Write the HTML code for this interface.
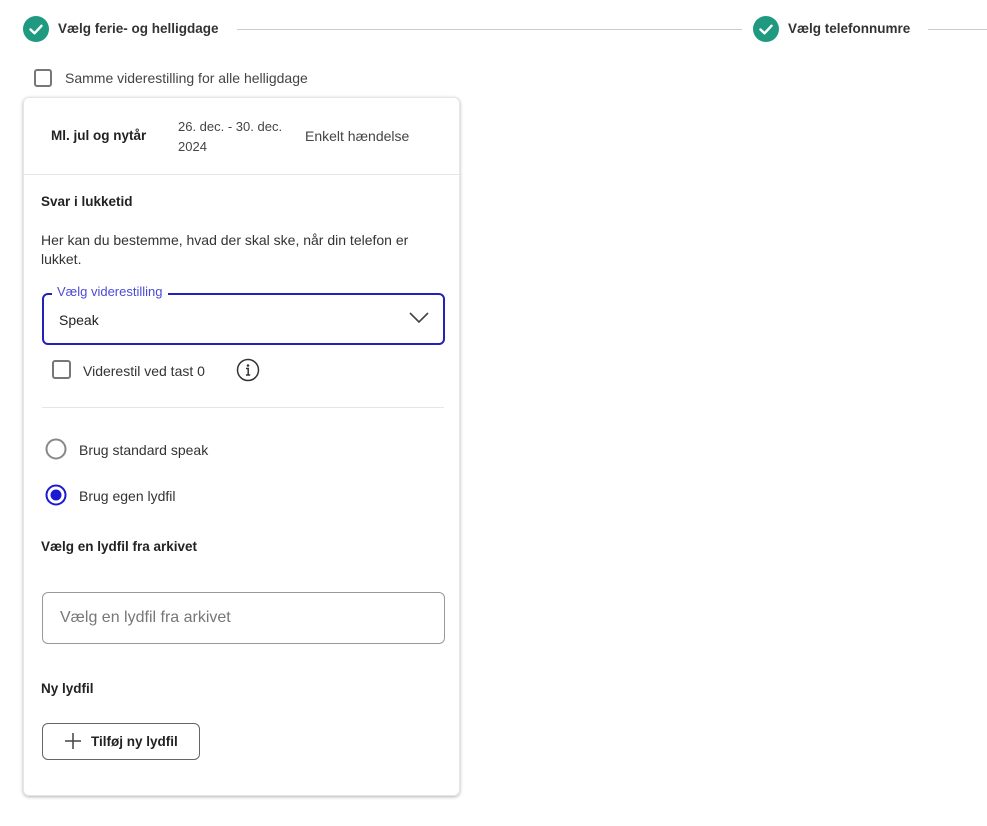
<!DOCTYPE html>
<html><head><meta charset="utf-8"><style>
*{margin:0;padding:0;box-sizing:border-box}
body{width:987px;height:826px;background:#fff;font-family:"Liberation Sans",sans-serif;color:#222;position:relative;overflow:hidden;font-size:14px}
.a{position:absolute;white-space:nowrap;line-height:16px}
.b{font-weight:bold}
.chk{position:absolute;width:18px;height:18px;border:2px solid #777;border-radius:3px;background:#fff}
</style></head><body>
<svg class="a" style="left:23px;top:16px" width="26" height="26"><circle cx="13" cy="13" r="13" fill="#1f9a80"/><path d="M7.5 13.5l4 3.8 7-7.5" stroke="#fff" stroke-width="2.4" fill="none" stroke-linecap="round" stroke-linejoin="round"/></svg>
<div class="a b" style="left:58px;top:21px;color:#333;font-size:13.5px">Vælg ferie- og helligdage</div>
<div class="a" style="left:237px;top:29px;width:505px;height:1px;background:#ccc"></div>
<svg class="a" style="left:753px;top:16px" width="26" height="26"><circle cx="13" cy="13" r="13" fill="#1f9a80"/><path d="M7.5 13.5l4 3.8 7-7.5" stroke="#fff" stroke-width="2.4" fill="none" stroke-linecap="round" stroke-linejoin="round"/></svg>
<div class="a b" style="left:788px;top:21px;color:#333;font-size:13.5px">Vælg telefonnumre</div>
<div class="a" style="left:928px;top:29px;width:59px;height:1px;background:#ccc"></div>

<div class="chk" style="left:34px;top:69px"></div>
<div class="a" style="left:65px;top:70px;color:#444">Samme viderestilling for alle helligdage</div>

<div class="a" style="left:23px;top:97px;width:437px;height:699px;border-radius:6px;box-shadow:0 1px 3px rgba(0,0,0,.3);border:1px solid #e6e6e6"></div>
<div class="a" style="left:24px;top:174px;width:438px;height:1px;background:#e6e6e6"></div>
<div class="a b" style="left:51px;top:128px;font-size:13.5px">Ml. jul og nytår</div>
<div class="a" style="left:178px;top:117px;line-height:20px;color:#444;font-size:13px">26. dec. - 30. dec.<br>2024</div>
<div class="a" style="left:305px;top:128px;color:#444">Enkelt hændelse</div>

<div class="a b" style="left:41px;top:194px;font-size:13.5px">Svar i lukketid</div>
<div class="a" style="left:41px;top:231px;line-height:19px;color:#333">Her kan du bestemme, hvad der skal ske, når din telefon er<br>lukket.</div>

<div class="a" style="left:42px;top:293px;width:403px;height:52px;border:2px solid #2222b8;border-radius:6px"></div>
<div class="a" style="left:52px;top:284px;background:#fff;padding:0 5px;color:#4b4bd6;font-size:13px">Vælg viderestilling</div>
<div class="a" style="left:59px;top:312px;color:#222">Speak</div>
<svg class="a" style="left:409px;top:312px" width="20" height="12"><path d="M1 1l9 9 9-9" stroke="#444" stroke-width="1.6" fill="none"/></svg>

<div class="chk" style="left:52px;top:360px;width:19px;height:19px"></div>
<div class="a" style="left:83px;top:363px;color:#333">Viderestil ved tast 0</div>
<svg class="a" style="left:236px;top:358px" width="24" height="24"><circle cx="12" cy="12" r="10.5" stroke="#333" stroke-width="1.5" fill="none"/><circle cx="12" cy="7.5" r="1.3" fill="#333"/><path d="M10 10.5h2.2v6.5M10 17h4.2" stroke="#333" stroke-width="1.5" fill="none"/></svg>
<div class="a" style="left:42px;top:407px;width:402px;height:1px;background:#e6e6e6"></div>

<svg class="a" style="left:45px;top:438px" width="22" height="22"><circle cx="11" cy="11" r="9.5" stroke="#888" stroke-width="2" fill="#fff"/></svg>
<div class="a" style="left:79px;top:442px;color:#333">Brug standard speak</div>
<svg class="a" style="left:45px;top:484px" width="22" height="22"><circle cx="11" cy="11" r="9.5" stroke="#1a1ad0" stroke-width="2" fill="#fff"/><circle cx="11" cy="11" r="5.5" fill="#1a1ad0"/></svg>
<div class="a" style="left:79px;top:488px;color:#333">Brug egen lydfil</div>

<div class="a b" style="left:41px;top:539px;font-size:13.5px">Vælg en lydfil fra arkivet</div>
<div class="a" style="left:42px;top:592px;width:403px;height:52px;border:1.5px solid #999;border-radius:6px"></div>
<div class="a" style="left:60px;top:609px;color:#777;font-size:16px;line-height:18px">Vælg en lydfil fra arkivet</div>

<div class="a b" style="left:41px;top:681px;font-size:13.5px">Ny lydfil</div>
<div class="a" style="left:42px;top:723px;width:158px;height:37px;border:1.5px solid #666;border-radius:6px"></div>
<svg class="a" style="left:64px;top:732px" width="18" height="18"><path d="M9 1v16M1 9h16" stroke="#444" stroke-width="1.5"/></svg>
<div class="a b" style="left:91px;top:734px;font-size:13.5px">Tilføj ny lydfil</div>
</body></html>
